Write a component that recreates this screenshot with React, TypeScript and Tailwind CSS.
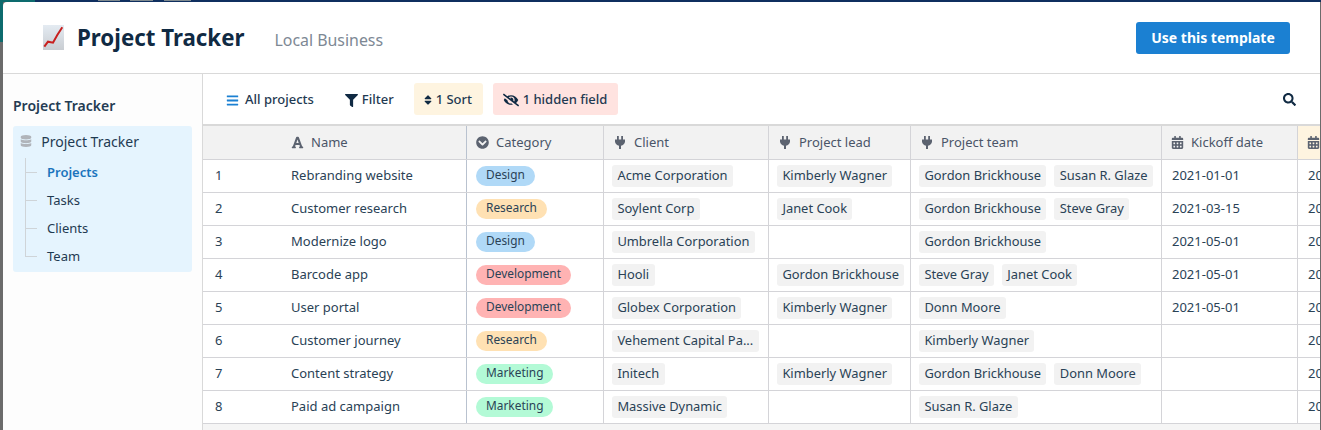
import { FaBars, FaFilter, FaSort, FaEyeSlash, FaSearch, FaDatabase, FaChevronCircleDown, FaFont, FaCalendarAlt } from "react-icons/fa";

const clients = [
  "Acme Corporation",
  "Soylent Corp",
  "Umbrella Corporation",
  "Hooli",
  "Globex Corporation",
  "Vehement Capital Pa...",
  "Initech",
  "Massive Dynamic",
];

const categoryColor: Record<string, string> = {
  Design: "bg-[#b0d9f7]",
  Research: "bg-[#ffe1b3]",
  Development: "bg-[#ffb3b3]",
  Marketing: "bg-[#b3fad6]",
};

const rows = [
  { name: "Rebranding website", cat: "Design", lead: ["Kimberly Wagner"], team: ["Gordon Brickhouse", "Susan R. Glaze"], date: "2021-01-01" },
  { name: "Customer research", cat: "Research", lead: ["Janet Cook"], team: ["Gordon Brickhouse", "Steve Gray"], date: "2021-03-15" },
  { name: "Modernize logo", cat: "Design", lead: [], team: ["Gordon Brickhouse"], date: "2021-05-01" },
  { name: "Barcode app", cat: "Development", lead: ["Gordon Brickhouse"], team: ["Steve Gray", "Janet Cook"], date: "2021-05-01" },
  { name: "User portal", cat: "Development", lead: ["Kimberly Wagner"], team: ["Donn Moore"], date: "2021-05-01" },
  { name: "Customer journey", cat: "Research", lead: [], team: ["Kimberly Wagner"], date: "" },
  { name: "Content strategy", cat: "Marketing", lead: ["Kimberly Wagner"], team: ["Gordon Brickhouse", "Donn Moore"], date: "" },
  { name: "Paid ad campaign", cat: "Marketing", lead: [], team: ["Susan R. Glaze"], date: "" },
];

function Chip({ text }: { text: string }) {
  return <span className="h-[22px] px-[5.4px] rounded-[3px] bg-[#f2f2f2] flex items-center whitespace-nowrap text-[12.9px]">{text}</span>;
}

// plug icon, the react-icons one sits at the wrong angle
function Plug() {
  return (
    <svg width="10" height="13" viewBox="0 0 10 13" fill="#5c6370">
      <rect x="2" y="0" width="1.8" height="4" />
      <rect x="6.2" y="0" width="1.8" height="4" />
      <path d="M0 3.4 H10 V5.6 C10 8 8 9.4 6 9.7 V13 H4 V9.7 C2 9.4 0 8 0 5.6 Z" />
    </svg>
  );
}

function Head({ icon, text, w, gap = "gap-[7px]", extra = "" }: { icon: React.ReactNode; text: string; w: string; gap?: string; extra?: string }) {
  return (
    <div className={`${w} ${gap} ${extra} shrink-0 h-[33px] flex items-center pl-[9px] border-r border-[#d4d4d8] text-[#4a5568]`}>
      <span className="w-[13px] flex justify-center text-[#5c6370] text-[13px]">{icon}</span>
      <span className="text-[13px] whitespace-nowrap">{text}</span>
    </div>
  );
}

export default function App() {
  return (
    <div className="w-[1321px] h-[430px] overflow-hidden bg-[#6b6b6b] font-['Noto_Sans',sans-serif] text-[#1f3a52]">
      {/* page behind the modal, only a sliver shows */}
      <div className="h-[2px] flex bg-[#0f2f5f]">
        <div className="w-[35px] bg-[#0d6b6e]" />
        <div className="ml-[63px] w-[22px] h-px bg-[#7f8a8f]" />
        <div className="ml-[10px] w-[23px] h-px bg-[#7f8a8f]" />
        <div className="ml-[11px] w-[27px] h-px bg-[#7f8a8f]" />
      </div>
      <div className="flex h-[428px]">
        <div className="w-[3px] shrink-0 flex flex-col">
          <div className="h-[40px] bg-[#0d6b6e]" />
          <div className="flex-1 bg-[#6b6b6b]" />
        </div>
        <div className="w-[1317px] h-[428px] bg-white flex flex-col rounded-tl-[4px] overflow-hidden">
          {/* header */}
          <div className="h-[72px] shrink-0 flex items-center border-b border-[#d9d9d9] pl-[40px] pr-[30px]">
            <svg width="21" height="25" viewBox="0 0 21 25" className="mr-[13px]">
              <defs>
                <linearGradient id="chartBg" x1="0" y1="0" x2="0" y2="1">
                  <stop offset="0" stopColor="#e4ebf2" />
                  <stop offset="1" stopColor="#c9cdd2" />
                </linearGradient>
              </defs>
              <rect x="0" y="0" width="21" height="25" fill="url(#chartBg)" />
              <path d="M1.3 21.7 L5 16.7 L10 17.7 L14.3 10 L19.3 2.3" fill="none" stroke="#c8201f" strokeWidth="2" />
            </svg>
            <span className="text-[22.3px] font-bold text-[#102a43]">Project Tracker</span>
            <span className="ml-[30px] mt-[6px] text-[15.9px] text-[#7d8894]">Local Business</span>
            <button className="ml-auto w-[154px] h-[32px] rounded-[3px] bg-[#1b80d2] text-white text-[14px] font-bold">Use this template</button>
          </div>

          <div className="flex flex-1 min-h-0">
            {/* sidebar */}
            <div className="w-[200px] shrink-0 border-r border-[#d9d9d9] bg-[#fdfdfd] pl-[10px] pr-[10px]">
              <div className="mt-[21px] text-[14px] font-semibold text-[#243b53]">Project Tracker</div>
              <div className="mt-[10px] h-[146px] rounded-[3px] bg-[#e5f4fe] relative">
                <div className="h-[30px] mb-[3px] flex items-center pl-[7px] text-[14px]">
                  <FaDatabase className="text-[#b0b4ba] text-[12px] mr-[9.25px]" />
                  Project Tracker
                </div>
                <div className="absolute left-[12px] top-[32px] w-px h-[98px] bg-[#cfd4d8]" />
                {["Projects", "Tasks", "Clients", "Team"].map((t, i) => (
                  <div key={t} className={`h-[28px] flex items-center pl-[34px] text-[13px] relative ${i === 0 ? "font-semibold text-[#1b74bd]" : ""}`}>
                    <span className="absolute left-[12px] top-[13px] w-[12px] h-px bg-[#cfd4d8]" />
                    {t}
                  </div>
                ))}
              </div>
            </div>

            {/* main */}
            <div className="flex-1 min-w-0 flex flex-col overflow-hidden">
              <div className="h-[50px] shrink-0 flex items-center text-[13px] font-medium text-[#1f3a52] pl-[11px] pr-[24px]">
                <div className="h-[32px] pt-[2px] flex items-center pl-[12px] pr-[9px]"><FaBars className="text-[#1b80d2] text-[13px] mr-[6px]" />All projects</div>
                <div className="h-[32px] pt-[2px] flex items-center ml-[13px] pl-[9px] pr-[9px]"><FaFilter className="text-[#102a43] text-[13px] mr-[4px]" />Filter</div>
                <div className="h-[32px] w-[69px] pt-[2px] flex items-center ml-[11px] pl-[8px] rounded-[3px] bg-[#fef4e0]"><FaSort className="text-[#102a43] text-[12px] mr-[2px]" />1 Sort</div>
                <div className="h-[32px] pt-[2px] flex items-center ml-[10px] pl-[10px] pr-[11px] rounded-[3px] bg-[#ffe3e0]"><FaEyeSlash className="text-[#102a43] text-[16px] mr-[4px]" />1 hidden field</div>
                <FaSearch className="ml-auto text-[#102a43] text-[13px]" />
              </div>

              <div className="flex-1 min-h-0 border-t-2 border-[#d9d9d9] bg-[#f5f5f5]">
                <div className="flex bg-[#f2f2f2] border-b border-[#d4d4d8]">
                  <div className="w-[264px] shrink-0 h-[33px] flex items-center gap-[7px] pl-[88px] border-r border-[#b9c2cf] text-[#4a5568]">
                    <FaFont className="text-[#5c6370] text-[13px]" />
                    <span className="text-[13px]">Name</span>
                  </div>
                  <Head w="w-[137px]" icon={<FaChevronCircleDown />} text="Category" />
                  <Head w="w-[165px]" gap="gap-[8px]" icon={<Plug />} text="Client" />
                  <Head w="w-[142px]" gap="gap-[8px]" icon={<Plug />} text="Project lead" />
                  <Head w="w-[251px]" gap="gap-[8px]" icon={<Plug />} text="Project team" />
                  <Head w="w-[136px]" icon={<FaCalendarAlt />} text="Kickoff date" />
                  <Head w="w-[60px]" extra="bg-[#fef4e0]" icon={<FaCalendarAlt />} text="Due date" />
                </div>

                {rows.map((r, i) => (
                  <div key={r.name} className="flex h-[33px] bg-white border-b border-[#d4d4d8] text-[13px] text-[#2a4256]">
                    <div className="w-[264px] shrink-0 flex items-center border-r border-[#b9c2cf]">
                      <span className="w-[88px] pl-[12px]">{i + 1}</span>
                      <span className="whitespace-nowrap">{r.name}</span>
                    </div>
                    <div className="w-[137px] shrink-0 flex items-center pl-[9px] border-r border-[#d4d4d8]">
                      <span className={`h-[20px] px-[10px] pb-[2px] rounded-full flex items-center text-[11.9px] ${categoryColor[r.cat]}`}>{r.cat}</span>
                    </div>
                    <div className="w-[165px] shrink-0 flex items-center pl-[8px] border-r border-[#d4d4d8]"><Chip text={clients[i]} /></div>
                    <div className="w-[142px] shrink-0 flex items-center pl-[8px] border-r border-[#d4d4d8]">
                      {r.lead.map((p) => <Chip key={p} text={p} />)}
                    </div>
                    <div className="w-[251px] shrink-0 flex items-center gap-[8px] pl-[8px] border-r border-[#d4d4d8]">
                      {r.team.map((p) => <Chip key={p} text={p} />)}
                    </div>
                    <div className="w-[136px] shrink-0 flex items-center pl-[10px] border-r border-[#d4d4d8]">{r.date}</div>
                    <div className="w-[60px] shrink-0 flex items-center pl-[10px] whitespace-nowrap">2021-06-01</div>
                  </div>
                ))}
              </div>
            </div>
          </div>
        </div>
      </div>
    </div>
  );
}
